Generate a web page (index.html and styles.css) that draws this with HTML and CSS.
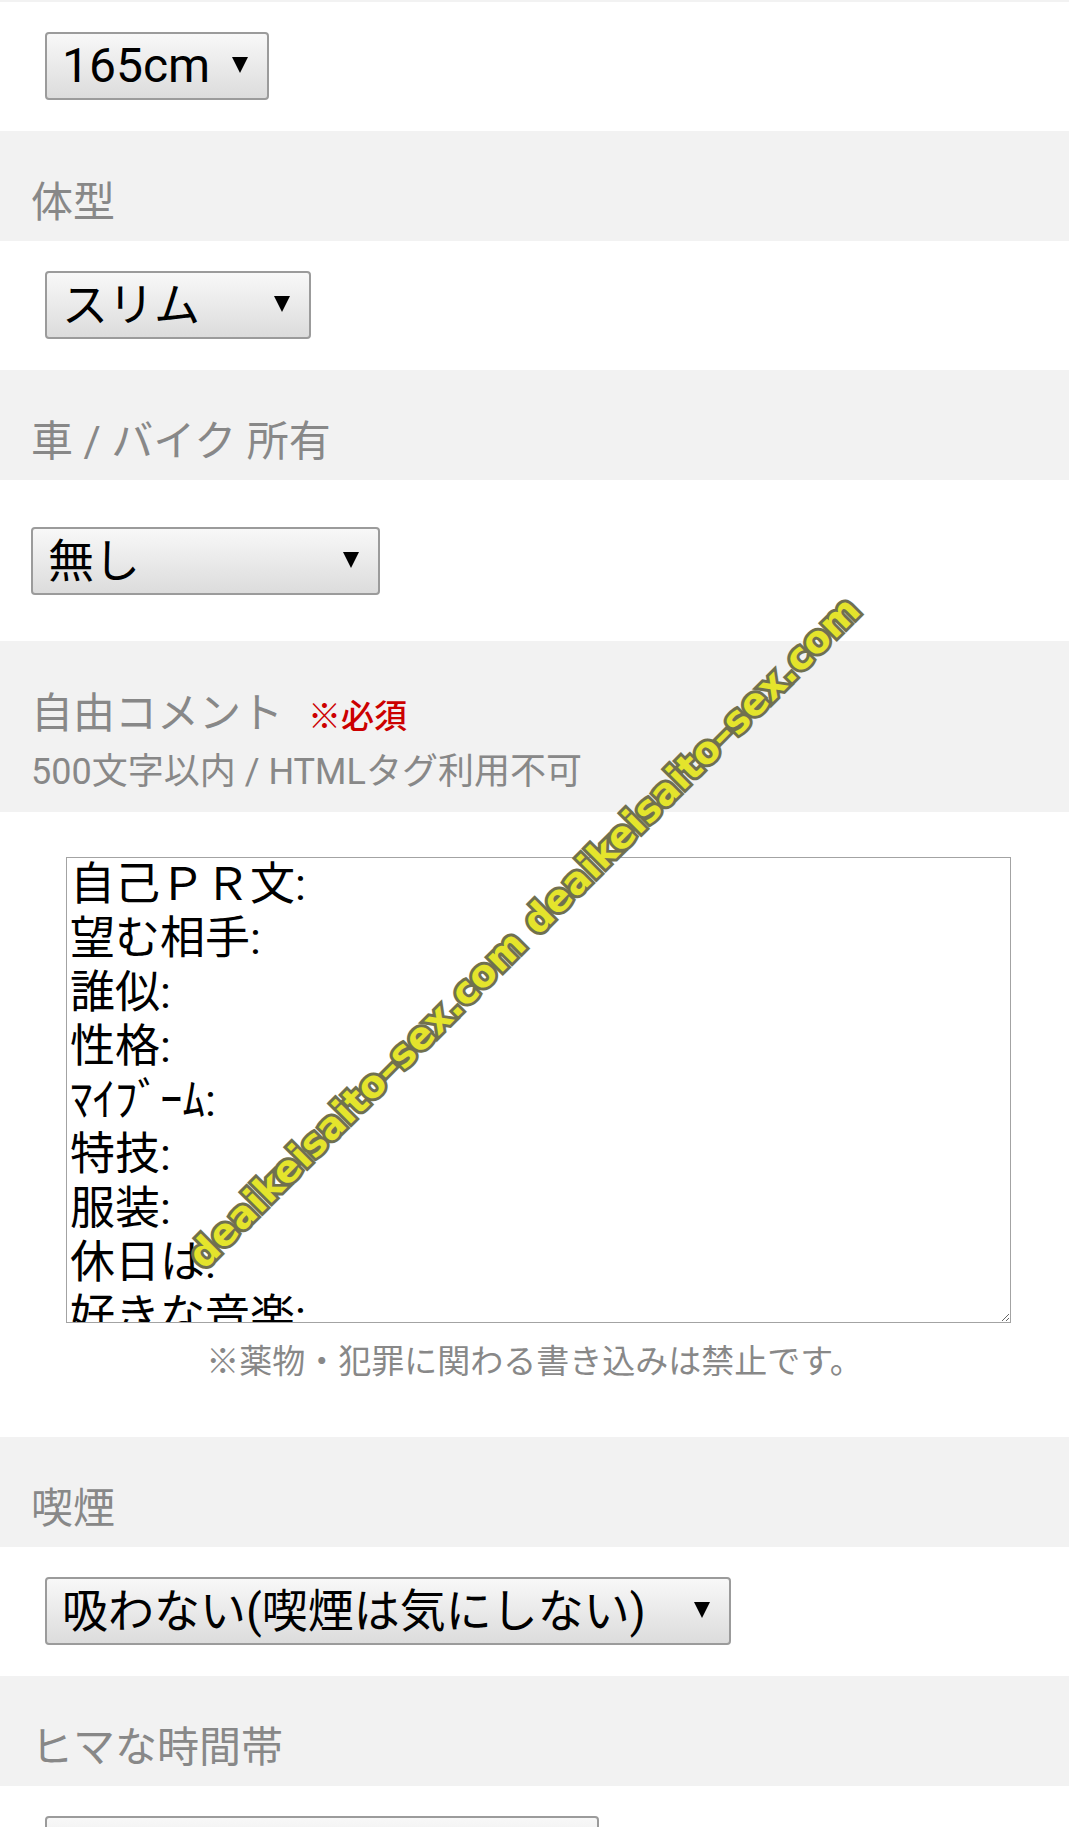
FILE: index.html
```html
<!DOCTYPE html>
<html lang="ja">
<head>
<meta charset="utf-8">
<title>プロフィール編集</title>
<link rel="stylesheet" href="styles.css">
</head>
<body>
<div class="page">
  <div class="strip"></div>

  <div class="field">
    <div class="select w-height"><span class="select-text latin">165cm</span><svg class="arrow" viewBox="0 0 16 16"><path d="M0 0H16L8 16Z"/></svg></div>
  </div>

  <div class="label">体型</div>
  <div class="field">
    <div class="select w-body"><span class="select-text">スリム</span><svg class="arrow" viewBox="0 0 16 16"><path d="M0 0H16L8 16Z"/></svg></div>
  </div>

  <div class="label">車 / バイク 所有</div>
  <div class="field field-car">
    <div class="select w-car"><span class="select-text">無し</span><svg class="arrow" viewBox="0 0 16 16"><path d="M0 0H16L8 16Z"/></svg></div>
  </div>

  <div class="label label-comment">
    <div class="label-main">自由コメント<span class="required">※必須</span></div>
    <div class="label-sub">500文字以内 / HTMLタグ利用不可</div>
  </div>
  <div class="field field-comment">
    <textarea class="comment">自己ＰＲ文:
望む相手:
誰似:
性格:
ﾏｲﾌﾞｰﾑ:
特技:
服装:
休日は:
好きな音楽:
</textarea>
    <p class="note">※薬物・犯罪に関わる書き込みは禁止です。</p>
  </div>

  <div class="label">喫煙</div>
  <div class="field">
    <div class="select w-smoke"><span class="select-text">吸わない(喫煙は気にしない)</span><svg class="arrow" viewBox="0 0 16 16"><path d="M0 0H16L8 16Z"/></svg></div>
  </div>

  <div class="label">ヒマな時間帯</div>
  <div class="field">
    <div class="select w-time"><span class="select-text">指定なし</span><svg class="arrow" viewBox="0 0 16 16"><path d="M0 0H16L8 16Z"/></svg></div>
  </div>

  <div class="watermark">deaikeisaito–sex.com deaikeisaito–sex.com</div>
</div>
</body>
</html>
```

FILE: styles.css
```css
html, body {
  margin: 0;
  padding: 0;
  background: #ffffff;
}

body {
  font-family: Roboto, "Noto Sans CJK JP", sans-serif;
  color: #000;
}

.page {
  position: relative;
  width: 1069px;
  overflow: hidden;
}

.strip {
  height: 2px;
  background: #f2f2f2;
}

.field {
  background: #ffffff;
  padding: 30px 0 31px 45px;
}

.field-car {
  padding: 47px 0 46px 31px;
}

.label {
  background: #f2f2f2;
  color: #888888;
  font-family: Roboto, "Noto Sans CJK JP", sans-serif;
  font-size: 42px;
  line-height: 50px;
  padding: 47px 0 13px 31px;
}

.label-comment {
  padding: 48px 0 20px 31px;
}

.label-main {
  line-height: 50px;
}

.required {
  color: #cc0000;
  font-size: 33px;
  font-weight: 500;
  margin-left: 25px;
}

.label-sub {
  font-size: 36px;
  line-height: 40px;
  margin-top: 10px;
}

.select {
  box-sizing: border-box;
  height: 68px;
  display: flex;
  align-items: center;
  border: 2px solid #9b9b9b;
  border-radius: 4px;
  background: linear-gradient(#f8f8f8, #dcdcdc);
  padding: 0 19px 0 15px;
  font-size: 46px;
  line-height: 56px;
  color: #000;
  white-space: nowrap;
}

.select-text {
  flex: 1 1 auto;
}

.select-text.latin {
  font-size: 48px;
}

.arrow {
  flex: 0 0 auto;
  width: 16px;
  height: 16px;
  margin-top: -3px;
  margin-left: 10px;
  fill: #000;
}

.w-height { width: 224px; }
.w-body { width: 266px; }
.w-car { width: 349px; }
.w-smoke { width: 686px; }
.w-time { width: 554px; }

.field-comment {
  padding: 45px 0 55px 0;
}

.comment {
  display: block;
  box-sizing: border-box;
  margin: 0 0 0 66px;
  width: 945px;
  height: 466px;
  border: 1px solid #a3a3a3;
  border-radius: 0;
  padding: 0 3px;
  font-family: Roboto, "Noto Sans CJK JP", sans-serif;
  font-size: 45px;
  line-height: 54px;
  color: #000;
  background: #fff;
  overflow: hidden;
  resize: both;
  outline: none;
}

.note {
  margin: 19px 0 0 0;
  text-align: center;
  font-family: Roboto, "Noto Sans CJK JP", sans-serif;
  font-size: 33px;
  line-height: 40px;
  color: #888888;
}

.watermark {
  position: absolute;
  left: 524px;
  top: 932px;
  transform: translate(-50%, -50%) rotate(-45deg);
  font-family: "DejaVu Sans", "Liberation Sans", sans-serif;
  font-weight: bold;
  font-size: 37.5px;
  line-height: 40px;
  letter-spacing: 0.5px;
  white-space: nowrap;
  color: #e4e42c;
  -webkit-text-stroke: 6px #707050;
  paint-order: stroke fill;
  pointer-events: none;
}
```
